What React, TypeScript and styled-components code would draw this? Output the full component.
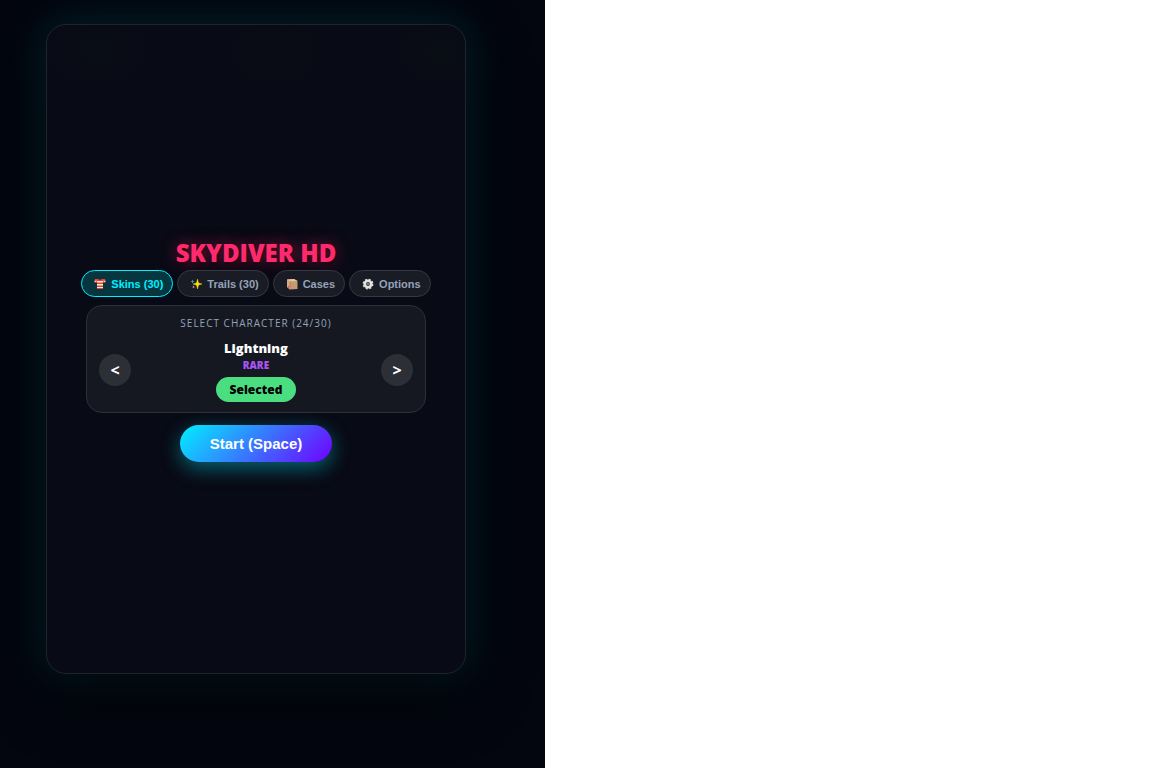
import React, { useState } from "react";
import styled, { createGlobalStyle, css } from "styled-components";

const GlobalStyle = createGlobalStyle`
  *, *::before, *::after { box-sizing: border-box; }
  body { margin: 0; background: #fff; }
`;

const Stage = styled.main`
  width: 100%;
  max-width: 545px;
  min-height: 100vh;
  padding: 24px 79px 24px 46px;
  overflow: hidden;
  background: #03060f;
  color: #fff;
  font-family: "Open Sans", sans-serif;
`;

const Panel = styled.section`
  display: flex;
  flex-direction: column;
  align-items: center;
  justify-content: center;
  min-height: 650px;
  border: 1px solid #1f232b;
  border-radius: 20px;
  background:
    radial-gradient(ellipse 60px 40px at 50px 25px, #090d15, transparent),
    radial-gradient(ellipse 50px 40px at 228px 25px, #090c14, transparent),
    radial-gradient(ellipse 50px 40px at 395px 25px, #090d14, transparent),
    #080a15;
  box-shadow: 0 20px 60px rgba(0, 0, 0, 0.6), 0 0 40px rgba(0, 240, 255, 0.15);
`;

const Title = styled.h1`
  margin: 0;
  font-size: 24px;
  line-height: 34px;
  font-weight: 800;
  color: #ff2a6d;
  text-shadow: 0 0 15px rgba(255, 42, 109, 0.5), 0 2px 4px #000;
`;

const Tabs = styled.nav`
  display: flex;
  justify-content: center;
  gap: 4px;
  margin-bottom: 8px;
`;

const Tab = styled.button<{ $active: boolean }>`
  display: flex;
  align-items: center;
  gap: 5px;
  height: 27px;
  padding: 0 9px 0 12px;
  border: 1px solid #363941;
  border-radius: 14px;
  background: #1a1c25;
  color: #94a3b8;
  font: bold 11px "Liberation Sans", sans-serif;
  white-space: nowrap;
  cursor: pointer;
  ${(p) =>
    p.$active &&
    css`
      border-color: #00f0ff;
      background: #063640;
      color: #00f0ff;
    `}
`;

const Icon = styled.svg`
  width: 12px;
  height: 12px;
  flex: none;
`;

const Card = styled.section`
  width: 340px;
  max-width: 100%;
  padding: 10px 12px;
  border: 1px solid #2d3039;
  border-radius: 16px;
  background: #161821;
  text-align: center;
`;

const Label = styled.h2`
  margin: 0 0 8px;
  font-size: 10px;
  line-height: 14px;
  font-weight: 400;
  letter-spacing: 1px;
  color: #94a3b8;
`;

const Picker = styled.div`
  display: flex;
  align-items: center;
  justify-content: space-between;
`;

const Arrow = styled.button`
  width: 32px;
  height: 32px;
  padding: 0;
  border: 0;
  border-radius: 50%;
  background: #2d2f37;
  color: #fff;
  font: bold 16px "Open Sans", sans-serif;
  cursor: pointer;
`;

const Character = styled.div`
  display: flex;
  flex-direction: column;
  align-items: center;
`;

const Name = styled.strong`
  font-size: 13px;
  line-height: 20px;
  font-weight: 800;
`;

const Rarity = styled.span`
  margin-bottom: 4px;
  font-size: 10px;
  line-height: 15px;
  font-weight: 800;
  color: #a855f7;
`;

const Selected = styled.button`
  height: 25px;
  padding: 0 14px;
  border: 0;
  border-radius: 13px;
  background: #4ade80;
  color: #000;
  font: 800 12px "Open Sans", sans-serif;
  cursor: pointer;
`;

const Start = styled.button`
  height: 37px;
  margin-top: 12px;
  padding: 0 30px;
  border: 0;
  border-radius: 19px;
  background: linear-gradient(135deg, #00f0ff, #7000ff);
  box-shadow: 0 6px 20px rgba(0, 240, 255, 0.4);
  color: #fff;
  font: bold 15px "Liberation Sans", sans-serif;
  cursor: pointer;
`;

const ShirtIcon = () => (
  <Icon viewBox="0 0 12 12" aria-hidden="true">
    <path d="M1 1h3l2 1 2-1h3l1 3-2 1-1-.5V11H3V4.500L2 5 0 4z" fill="#e5432d" />
    <path d="M3 3h6v1.500H3zM3 6h6v1.500H3zM3 9h6v1H3zM.5 3l2-.5v1L1 4zM11.500 3l-2-.5v1L11 4z" fill="#ffe9dc" />
  </Icon>
);

const SparkIcon = () => (
  <Icon viewBox="0 0 12 12" aria-hidden="true">
    <path d="M7.500 1l1 4 3.500 1-3.500 1-1 4-1-4L3 6l3.500-1z" fill="#ffe600" stroke="#ffe600" strokeWidth=".4" />
    <path d="M2.500 1.500l.6 1.400 1.400.6-1.400.6-.6 1.400-.6-1.400L.5 3.500l1.400-.6z" fill="#2aa7b8" />
    <path d="M3.500 7.500l.5 1 1 .5-1 .5-.5 1-.5-1L2 9l1-.5z" fill="#e779a8" />
  </Icon>
);

const BoxIcon = () => (
  <Icon viewBox="0 0 12 12" aria-hidden="true">
    <path d="M1 1.500L8 1l3.500 2v8L4 11.500 1 9z" fill="#c69a70" />
    <path d="M1 1.500L8 1l3.500 2L4 3.500z" fill="#e5c5a1" />
    <path d="M1 1.500l3 2v8L1 9z" fill="#dba98a" />
    <path d="M4 3.500v8" stroke="#8f6845" strokeWidth=".6" />
    <path d="M2 8h1v1.500H2z" fill="#d64531" />
  </Icon>
);

const GearIcon = () => (
  <Icon viewBox="0 0 12 12" aria-hidden="true">
    <circle cx="6" cy="6" r="4.800" fill="none" stroke="#dedede" strokeWidth="1.200" strokeDasharray="2.200 1.570" />
    <circle cx="6" cy="6" r="3.200" fill="none" stroke="#e4e4e4" strokeWidth="2.600" />
    <circle cx="6" cy="6" r="1.300" fill="#aaa" />
    <circle cx="6" cy="6" r=".7" fill="#333740" />
  </Icon>
);

const tabs = [
  { text: "Skins (30)", Glyph: ShirtIcon },
  { text: "Trails (30)", Glyph: SparkIcon },
  { text: "Cases", Glyph: BoxIcon },
  { text: "Options", Glyph: GearIcon },
];

export default function App() {
  const [active, setActive] = useState(0);
  return (
    <>
      <GlobalStyle />
      <Stage>
        <Panel>
          <Title>SKYDIVER HD</Title>
          <Tabs>
            {tabs.map(({ text, Glyph }, i) => (
              <Tab key={text} type="button" $active={i === active} onClick={() => setActive(i)}>
                <Glyph />
                {text}
              </Tab>
            ))}
          </Tabs>
          <Card>
            <Label>SELECT CHARACTER (24/30)</Label>
            <Picker>
              <Arrow type="button">&lt;</Arrow>
              <Character>
                <Name>Lightning</Name>
                <Rarity>RARE</Rarity>
                <Selected type="button">Selected</Selected>
              </Character>
              <Arrow type="button">&gt;</Arrow>
            </Picker>
          </Card>
          <Start type="button">Start (Space)</Start>
        </Panel>
      </Stage>
    </>
  );
}
